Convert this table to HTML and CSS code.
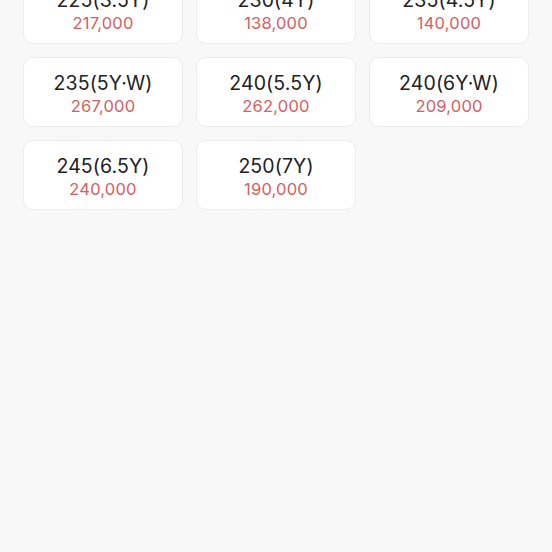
FILE: index.html
```html
<!DOCTYPE html>
<html lang="ko">
<head>
<meta charset="utf-8">
<link rel="stylesheet" href="styles.css">
</head>
<body>
<div class="page">
  <div class="grid">
    <div class="card"><div class="size">225(3.5Y)</div><div class="price">217,000</div></div>
    <div class="card"><div class="size">230(4Y)</div><div class="price">138,000</div></div>
    <div class="card"><div class="size">235(4.5Y)</div><div class="price">140,000</div></div>
    <div class="card"><div class="size">235(5Y·W)</div><div class="price">267,000</div></div>
    <div class="card"><div class="size">240(5.5Y)</div><div class="price">262,000</div></div>
    <div class="card"><div class="size">240(6Y·W)</div><div class="price">209,000</div></div>
    <div class="card"><div class="size">245(6.5Y)</div><div class="price">240,000</div></div>
    <div class="card"><div class="size">250(7Y)</div><div class="price">190,000</div></div>
  </div>
</div>
</body>
</html>
```
FILE: styles.css
```css
html, body {
  margin: 0;
  padding: 0;
  background: #f8f8f8;
  height: 100%;
  overflow: hidden;
}
.page {
  padding: 0 23px;
  font-family: "Inter", "Roboto", sans-serif;
}
.grid {
  margin-top: -26px;
  display: grid;
  grid-template-columns: repeat(3, 160px);
  gap: 13px;
}
.card {
  height: 70px;
  box-sizing: border-box;
  background: #fff;
  border: 1px solid #ececec;
  border-radius: 10px;
  display: flex;
  flex-direction: column;
  align-items: center;
  justify-content: center;
  padding-top: 3px;
}
.size {
  font-size: 19.5px;
  line-height: 24px;
  color: #222;
  letter-spacing: 0.1px;
}
.price {
  font-size: 16.5px;
  line-height: 22px;
  color: #d4605f;
  letter-spacing: 0.2px;
}
```
